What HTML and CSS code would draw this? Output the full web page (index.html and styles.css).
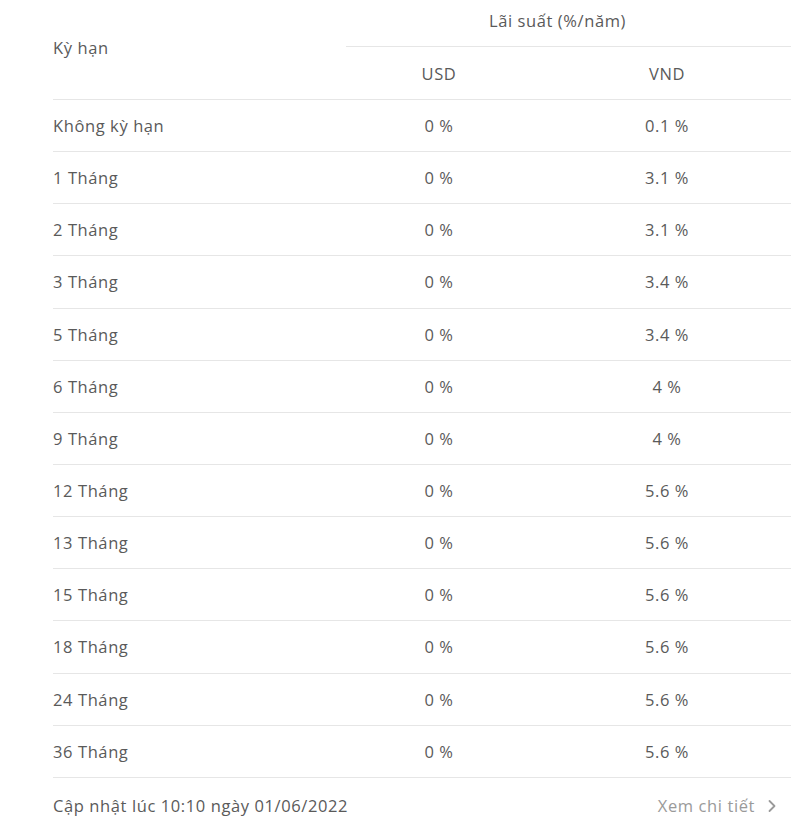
FILE: index.html
```html
<!DOCTYPE html>
<html lang="vi">
<head>
<meta charset="utf-8">
<title>Lãi suất</title>
<link rel="stylesheet" href="styles.css">
</head>
<body>
<div class="rates">
  <div class="head">
    <div class="term-head">Kỳ hạn</div>
    <div class="rate-head">
      <div class="rate-title">Lãi suất (%/năm)</div>
      <div class="cur-row">
        <div class="cur usd">USD</div>
        <div class="cur vnd">VND</div>
      </div>
    </div>
  </div>
  <div class="row"><div class="term">Không kỳ hạn</div><div class="val usd">0 %</div><div class="val vnd">0.1 %</div></div>
  <div class="row"><div class="term">1 Tháng</div><div class="val usd">0 %</div><div class="val vnd">3.1 %</div></div>
  <div class="row"><div class="term">2 Tháng</div><div class="val usd">0 %</div><div class="val vnd">3.1 %</div></div>
  <div class="row"><div class="term">3 Tháng</div><div class="val usd">0 %</div><div class="val vnd">3.4 %</div></div>
  <div class="row"><div class="term">5 Tháng</div><div class="val usd">0 %</div><div class="val vnd">3.4 %</div></div>
  <div class="row"><div class="term">6 Tháng</div><div class="val usd">0 %</div><div class="val vnd">4 %</div></div>
  <div class="row"><div class="term">9 Tháng</div><div class="val usd">0 %</div><div class="val vnd">4 %</div></div>
  <div class="row"><div class="term">12 Tháng</div><div class="val usd">0 %</div><div class="val vnd">5.6 %</div></div>
  <div class="row"><div class="term">13 Tháng</div><div class="val usd">0 %</div><div class="val vnd">5.6 %</div></div>
  <div class="row"><div class="term">15 Tháng</div><div class="val usd">0 %</div><div class="val vnd">5.6 %</div></div>
  <div class="row"><div class="term">18 Tháng</div><div class="val usd">0 %</div><div class="val vnd">5.6 %</div></div>
  <div class="row"><div class="term">24 Tháng</div><div class="val usd">0 %</div><div class="val vnd">5.6 %</div></div>
  <div class="row"><div class="term">36 Tháng</div><div class="val usd">0 %</div><div class="val vnd">5.6 %</div></div>
  <div class="footer">
    <div class="updated">Cập nhật lúc 10:10 ngày 01/06/2022</div>
    <a class="more" href="#">Xem chi tiết
      <svg class="chev" width="10" height="14" viewBox="0 0 10 14"><path d="M2.5 2 L7.5 7 L2.5 12" fill="none" stroke="#9a9a9a" stroke-width="1.8" stroke-linecap="round" stroke-linejoin="round"/></svg>
    </a>
  </div>
</div>
</body>
</html>
```
FILE: styles.css
```css
html, body {
  margin: 0;
  padding: 0;
  background: #ffffff;
}
body {
  font-family: "Open Sans", "Noto Sans", sans-serif;
  font-size: 16.5px;
  letter-spacing: 0.6px;
  color: #5a5a5a;
}
.rates {
  width: 738px;
  margin-left: 53px;
}
.head {
  display: flex;
  border-bottom: 1px solid #e6e6e6;
}
.term-head {
  width: 293px;
  display: flex;
  align-items: center;
  padding-bottom: 4px;
}
.rate-head {
  flex: 1;
}
.rate-title {
  height: 47px;
  border-bottom: 1px solid #e6e6e6;
  display: flex;
  align-items: center;
  justify-content: center;
  padding-right: 22px;
  padding-bottom: 6px;
  box-sizing: border-box;
}
.cur-row {
  display: flex;
  height: 52px;
  align-items: center;
}
.cur, .val {
  text-align: center;
}
.usd {
  width: 186px;
}
.vnd {
  flex: 1;
  padding-left: 11px;
  box-sizing: border-box;
}
.row {
  display: flex;
  align-items: center;
  height: 52.15px;
  box-sizing: border-box;
  border-bottom: 1px solid #e6e6e6;
}
.term {
  width: 293px;
}
.footer {
  display: flex;
  justify-content: space-between;
  align-items: center;
  height: 56px;
}
.more {
  display: flex;
  align-items: center;
  gap: 12px;
  color: #9a9a9a;
  text-decoration: none;
  margin-right: 14px;
}
.chev {
  display: block;
}
```
